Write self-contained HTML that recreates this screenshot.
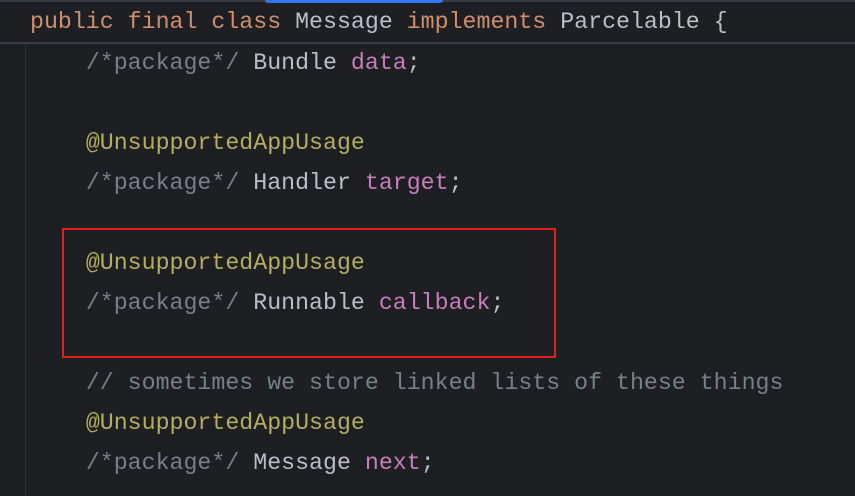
<!DOCTYPE html>
<html><head><meta charset="utf-8"><style>
html,body{margin:0;padding:0;background:#1e1f22;width:855px;height:496px;overflow:hidden;position:relative}
.l{position:absolute;left:30px;height:40px;line-height:40px;white-space:pre;font-family:"Liberation Mono","DejaVu Sans Mono",monospace;font-size:23.25px;color:#bcbec4}
.k{color:#cf8e6d}.c{color:#7a7e85}.f{color:#c77dbb}.a{color:#b3ae60}
</style></head><body>
<div style="position:absolute;left:0;top:0;width:855px;height:2px;background:#393b40"></div>
<div style="position:absolute;left:265px;top:0;width:178px;height:3px;background:#3574f0;border-radius:0 0 3px 3px"></div>
<div style="position:absolute;left:0;top:42px;width:855px;height:2px;background:#393b40"></div>
<div style="position:absolute;left:25px;top:44px;width:1px;height:452px;background:#313438"></div>
<div class="l" style="top:2px"><span class="k">public final class</span> Message <span class="k">implements</span> Parcelable {</div>
<div class="l" style="top:43px">    <span class="c">/*package*/</span> Bundle <span class="f">data</span>;</div>
<div class="l" style="top:123px">    <span class="a">@UnsupportedAppUsage</span></div>
<div class="l" style="top:163px">    <span class="c">/*package*/</span> Handler <span class="f">target</span>;</div>
<div class="l" style="top:243px">    <span class="a">@UnsupportedAppUsage</span></div>
<div class="l" style="top:283px">    <span class="c">/*package*/</span> Runnable <span class="f">callback</span>;</div>
<div class="l" style="top:363px">    <span class="c">// sometimes we store linked lists of these things</span></div>
<div class="l" style="top:403px">    <span class="a">@UnsupportedAppUsage</span></div>
<div class="l" style="top:443px">    <span class="c">/*package*/</span> Message <span class="f">next</span>;</div>
<div style="position:absolute;left:62px;top:228px;width:490px;height:126px;border:2px solid #e0201f"></div>
</body></html>
